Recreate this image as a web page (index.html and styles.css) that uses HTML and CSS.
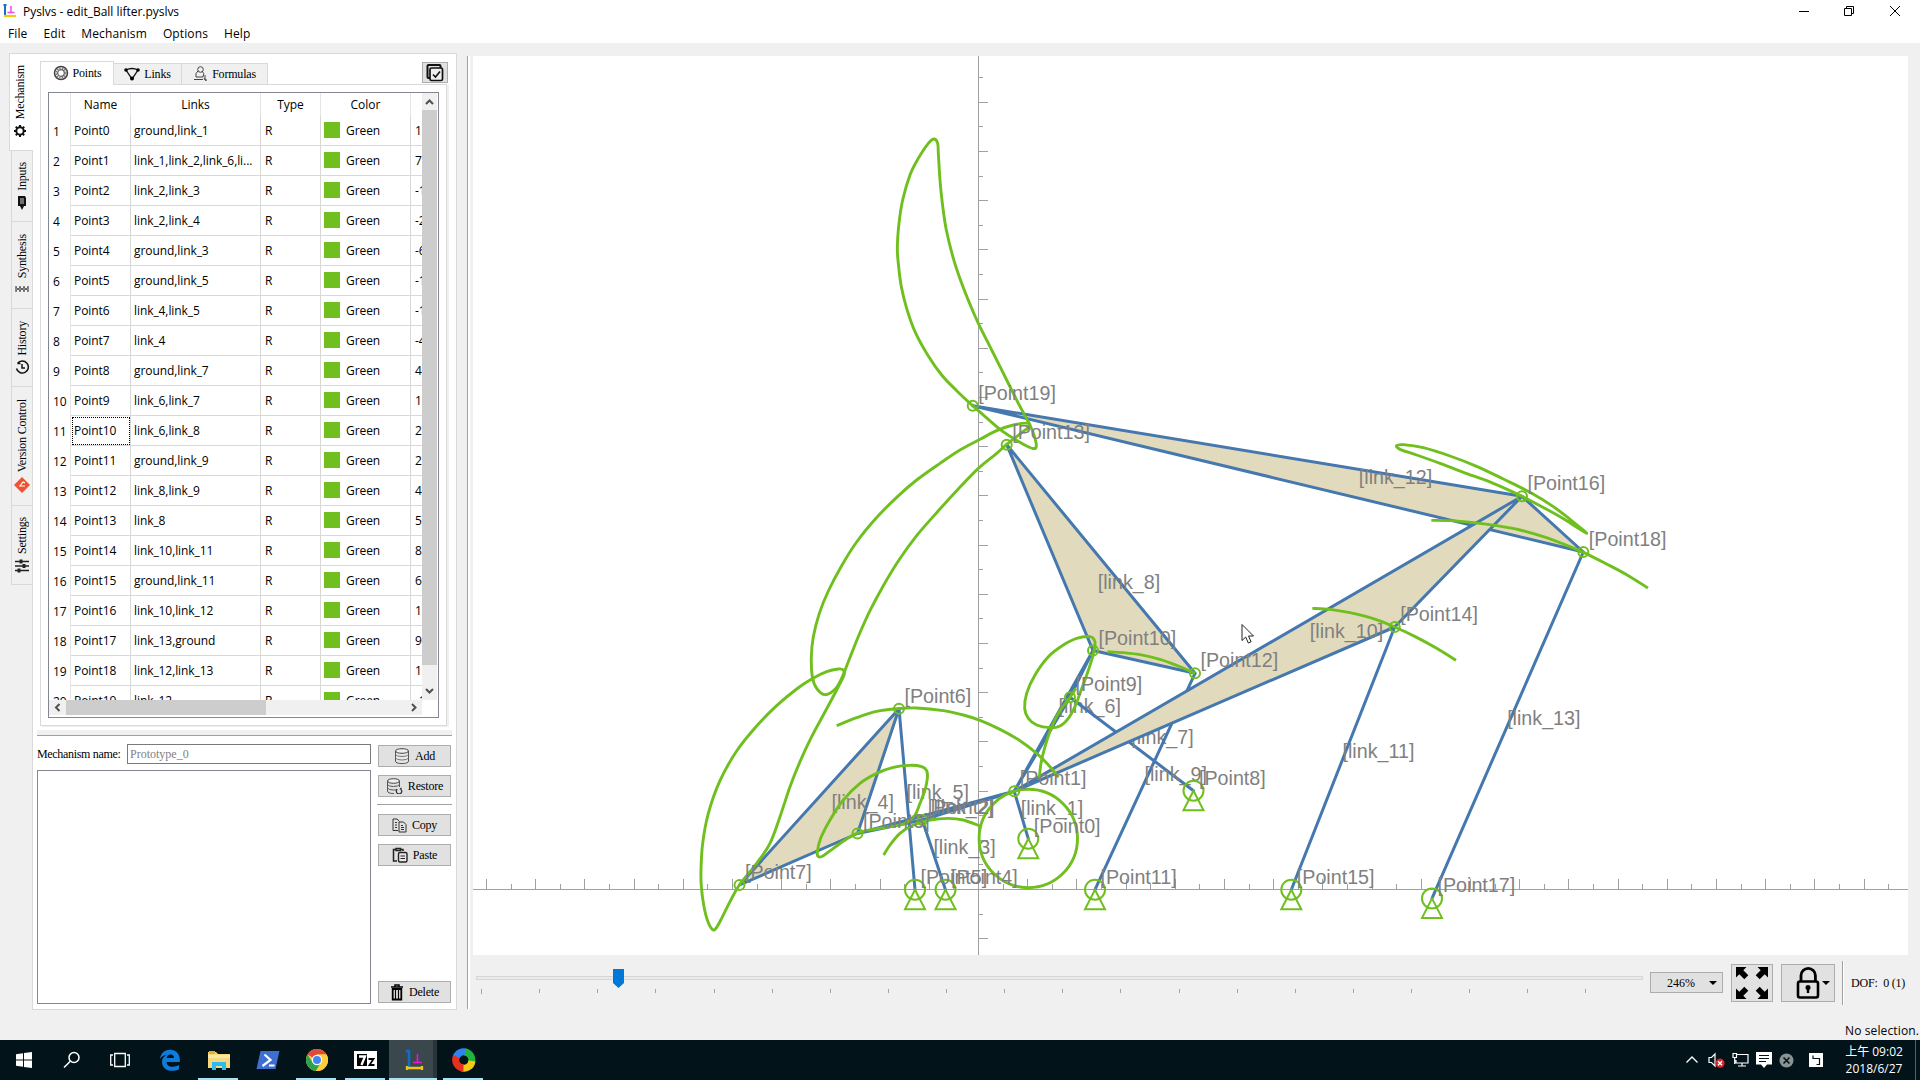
FILE: index.html
```html
<!DOCTYPE html>
<html lang="en">
<head>
<meta charset="utf-8">
<title>Pyslvs - edit_Ball lifter.pyslvs</title>
<link rel="stylesheet" href="styles.css">
</head>
<body>
<header class="titlebar">
  <svg class="app-icon" width="14" height="14" viewBox="0 0 14 14"><path d="M2 0v11M0.500 1h3" stroke="#1a6fc4" stroke-width="2" fill="none"/><path d="M1 12h12" stroke="#f5c815" stroke-width="2.200"/><path d="M8 2v6M4.500 8.500h7" stroke="#f04be0" stroke-width="1.500"/></svg>
  <span class="title">Pyslvs - edit_Ball lifter.pyslvs</span>
  <div class="window-buttons">
    <svg width="46" height="20" viewBox="0 0 46 20"><path d="M18 10.500h10" stroke="#000"/></svg>
    <svg width="46" height="20" viewBox="0 0 46 20"><path d="M17.500 7.500h7v7h-7zM19.500 7v-1.500h7v7h-2" stroke="#000" fill="none"/></svg>
    <svg width="46" height="20" viewBox="0 0 46 20"><path d="M17 5l10 10M27 5l-10 10" stroke="#000"/></svg>
  </div>
</header>
<nav class="menubar"><span>File</span><span>Edit</span><span>Mechanism</span><span>Options</span><span>Help</span></nav>

<main class="workspace">
  <div class="side-tabs">
    <div class="side-tab active" style="height:98px"><span>Mechanism</span>
      <svg width="12" height="12" viewBox="0 0 12 12"><circle cx="6" cy="6" r="3.700" fill="none" stroke="#111" stroke-width="2"/><path d="M6 0v2M6 10v2M0 6h2M10 6h2M1.800 1.800l1.400 1.400M8.800 8.800l1.400 1.400M10.200 1.800L8.800 3.200M3.200 8.800l-1.400 1.400" stroke="#111" stroke-width="2"/></svg></div>
    <div class="side-tab" style="height:71px"><span>Inputs</span>
      <svg width="12" height="15" viewBox="0 0 12 15"><path d="M2 1h7l1 2v8H2z" fill="#111"/><path d="M4 4h4M4 6h4M4 8h4" stroke="#fff" stroke-width=".8"/><path d="M4 11l2 4 2-4z" fill="#111"/></svg></div>
    <div class="side-tab synthesis" style="height:87px"><span>Synthesis</span>
      <svg width="14" height="8" viewBox="0 0 14 8"><path d="M1 1v6M13 1v6M5 1v6M9 1v6" stroke="#222" fill="none"/><path d="M1 2l4 4 4-4 4 4M1 6l4-4 4 4 4-4" stroke="#666" fill="none"/></svg></div>
    <div class="side-tab" style="height:78px"><span>History</span>
      <svg width="14" height="14" viewBox="0 0 14 14"><path d="M2.500 3.500a6 6 0 1 1-1 5M2.500 3.500h3M7 4v4h3" stroke="#111" stroke-width="1.500" fill="none"/></svg></div>
    <div class="side-tab" style="height:119px"><span>Version Control</span>
      <svg width="16" height="16" viewBox="0 0 16 16"><path d="M8 0l8 8-8 8-8-8z" fill="#f05133"/><path d="M5 9h6M6 9l3-4 2 1" stroke="#fff" stroke-width="1.200" fill="none"/></svg></div>
    <div class="side-tab" style="height:79px"><span>Settings</span>
      <svg width="14" height="14" viewBox="0 0 14 14"><path d="M0 2.500h14M0 7h14M0 11.500h14" stroke="#222" stroke-width="1.500"/><path d="M6 .5v4M9 5v4M4 9.500v4" stroke="#222" stroke-width="3"/></svg></div>
  </div>

  <section class="panel">
    <div class="tab-row">
      <div class="tab selected"><svg width="16" height="16" viewBox="0 0 16 16"><circle cx="8" cy="8" r="6.500" fill="none" stroke="#444" stroke-width="1.500"/><circle cx="8" cy="8" r="3.300" fill="none" stroke="#555" stroke-width="1.200"/><circle cx="8" cy="8" r="4.900" fill="none" stroke="#777" stroke-width="1.400" stroke-dasharray="1.600 1"/></svg>Points</div>
      <div class="tab"><svg width="16" height="14" viewBox="0 0 16 14"><path d="M2 3q6-3 12 0L8 12z" stroke="#111" fill="none" stroke-width="1.300"/><circle cx="2" cy="3" r="1.800"/><circle cx="14" cy="3" r="1.800"/><circle cx="8" cy="11.500" r="2"/></svg>Links</div>
      <div class="tab"><svg width="15" height="16" viewBox="0 0 15 16"><circle cx="7.500" cy="3.500" r="2.800" fill="none" stroke="#444"/><path d="M5 5Q2 7 3 11h7q2-4-1-6M1 13.500h9M12 9v5h2M11 12l2 3" stroke="#444" fill="none"/></svg>Formulas</div>
      <div class="check-button"><svg width="18" height="18" viewBox="0 0 18 18"><rect x="1.500" y="1" width="13" height="13" rx="1" fill="none" stroke="#111" stroke-width="2"/><rect x="4" y="4" width="12.500" height="12.500" rx="1.500" fill="#eee" stroke="#111" stroke-width="1.700"/><path d="M7 10.500l2.500 2.500 4.500-5.500" stroke="#111" stroke-width="1.600" fill="none"/></svg></div>
    </div>
    <div class="tab-page">
      <div class="table-frame">
        <div class="table-view">
          <table class="points">
            <colgroup><col style="width:22px"><col style="width:60px"><col style="width:130px"><col style="width:60px"><col style="width:90px"><col style="width:90px"></colgroup>
            <thead><tr><th></th><th>Name</th><th>Links</th><th>Type</th><th>Color</th><th></th></tr></thead>
            <tbody id="rows"></tbody>
          </table>
        </div>
        <div class="vscroll"><svg width="15" height="17" viewBox="0 0 15 17"><path d="M4 11l3.500-3.500L11 11" fill="none" stroke="#505050" stroke-width="2"/></svg><div class="vthumb"></div><svg class="bottom" width="15" height="17" viewBox="0 0 15 17"><path d="M4 6l3.500 3.500L11 6" fill="none" stroke="#505050" stroke-width="2"/></svg></div>
        <div class="hscroll"><svg width="17" height="15" viewBox="0 0 17 15"><path d="M10.500 4L7 7.500l3.500 3.500" fill="none" stroke="#505050" stroke-width="2"/></svg><div class="hthumb"></div><svg class="right" width="17" height="15" viewBox="0 0 17 15"><path d="M7 4l3.500 3.500L7 11" fill="none" stroke="#505050" stroke-width="2"/></svg></div>
      </div>
    </div>
    <div class="splitter-h"></div>
    <div class="storage">
      <div class="storage-left">
        <div class="name-row"><span>Mechanism name:</span><div class="name-input">Prototype_0</div></div>
        <div class="storage-list"></div>
      </div>
      <div class="storage-buttons">
        <div class="button"><svg width="16" height="16" viewBox="0 0 16 16"><path d="M1.500 3v10q0 2.500 6.500 2.500t6.500-2.500V3" fill="#e8e8e8" stroke="#555"/><ellipse cx="8" cy="3" rx="6.500" ry="2.300" fill="#eee" stroke="#444"/><path d="M1.500 6.500q1 2 6.500 2t6.500-2M1.500 10q1 2 6.500 2t6.500-2" fill="none" stroke="#777"/></svg>Add</div>
        <div class="button"><svg width="17" height="16" viewBox="0 0 17 16"><path d="M1.500 3v10q0 2.500 6.500 2.500M13.500 3v6" fill="none" stroke="#555"/><ellipse cx="7.500" cy="3" rx="6" ry="2.300" fill="#eee" stroke="#444"/><path d="M1.500 6.500q1 2 6 2t6-2M1.500 10q1 2 6 2t4-1" fill="none" stroke="#555"/><path d="M11 11.500a2.700 2.700 0 1 0 3.500-.5l1-1" fill="none" stroke="#333" stroke-width="1.300"/></svg>Restore</div>
        <div class="rule"></div>
        <div class="button"><svg width="15" height="15" viewBox="0 0 15 15"><path d="M6 12.500H1V1h4l2.500 2.500M7 4h4.500L14 6.500V14H7zM3 4.500h2M3 7h2M3 9.500h2M9 7.500h2M9 9.500h3M9 11.500h3" fill="none" stroke="#333"/></svg>Copy</div>
        <div class="button"><svg width="16" height="16" viewBox="0 0 16 16"><path d="M5 14H1.500V2.500H4M8.500 2.500H11V4M4 3.500V1.500h4.500v2z" fill="none" stroke="#222" stroke-width="1.500"/><rect x="6.500" y="5.500" width="8.500" height="9.500" rx="1.500" fill="#e8e8e8" stroke="#222" stroke-width="1.400"/><path d="M8.500 9h4.500M8.500 11.500h4.500" stroke="#222"/></svg>Paste</div>
        <div class="button last"><svg width="14" height="17" viewBox="0 0 14 17"><path d="M1 3h12M5 2.500V1h4v1.500" fill="none" stroke="#000" stroke-width="1.500"/><path d="M2.700 5v10.500h8.600V5z" fill="none" stroke="#000" stroke-width="1.800"/><path d="M5.500 5v10M8.500 5v10" stroke="#000" stroke-width="1.200"/></svg>Delete</div>
      </div>
    </div>
  </section>

  <div class="splitter-v"></div>

  <section class="view">
    <svg id="canvas" class="canvas" width="1435" height="899" viewBox="473 56 1435 899"></svg>
    <div class="controls">
      <svg id="slider" class="slider" width="1170" height="40" viewBox="475 960 1170 40"></svg>
      <div class="zoom-button"><span>246%</span><i class="caret"></i></div>
      <div class="fit-button"><svg width="34" height="34" viewBox="0 0 34 34"><path d="M1 1h10.500l-3.200 3.200 5 5-4 4-5-5L1 11.500zM33 1H22.500l3.200 3.200-5 5 4 4 5-5L33 11.500zM1 33h10.500l-3.200-3.200 5-5-4-4-5 5L1 22.500zM33 33H22.500l3.200-3.200-5-5 4-4 5 5L33 22.500z"/></svg></div>
      <div class="lock-button"><svg width="24" height="34" viewBox="0 0 24 34"><rect x="2" y="15.500" width="20" height="16" rx="2" fill="none" stroke="#000" stroke-width="2.600"/><path d="M5 15V9.500a7.200 7.200 0 0 1 14.400 0V15" fill="none" stroke="#000" stroke-width="2.800"/><circle cx="12" cy="21.500" r="2.500"/><path d="M12 22v5" stroke="#000" stroke-width="2.400"/></svg><i class="caret"></i></div>
      <div class="rule-v"></div>
      <span class="dof">DOF:&nbsp; 0 (1)</span>
    </div>
  </section>
</main>
<div class="statusbar">No selection.</div>

<footer class="taskbar">
  <div class="task"><svg width="16" height="16" viewBox="0 0 16 16"><path d="M0 2.200L7 1.200v6.300H0zM8 1l8-1v7.500H8zM0 8.500h7v6.300L0 13.800zM8 8.500h8V16l-8-1z" fill="#fff"/></svg></div>
  <div class="task"><svg width="18" height="18" viewBox="0 0 18 18"><circle cx="11" cy="6.500" r="5" fill="none" stroke="#fff" stroke-width="1.500"/><path d="M7.300 10.200L1 16.500" stroke="#fff" stroke-width="1.500"/></svg></div>
  <div class="task"><svg width="20" height="16" viewBox="0 0 20 16"><path d="M4.700 1.500h10.600v13H4.700zM3 3H.7v10H3M17 3h2.300v10H17" fill="none" stroke="#fff" stroke-width="1.300"/></svg></div>
  <div class="task"><svg width="22" height="22" viewBox="0 0 22 22"><path d="M1 9.800C1.800 4 6 .8 11.200.8c6 0 9.800 4.400 9.600 10v2.100H7.600c.2 3.300 2.900 4.800 6.200 4.800 2.300 0 4.300-.6 6.200-1.700v4.300c-2 1-4.300 1.500-7 1.500C7 21.800 3 18.200 3 13c0-3.300 2-6 5-7.200C5 6 2.500 7.600 1 9.800zm6.700-.7H15c0-2.200-1.200-3.500-3.400-3.500-2.100 0-3.500 1.300-3.900 3.500z" fill="#0f7cdb"/></svg></div>
  <div class="task open"><svg width="22" height="20" viewBox="0 0 22 20"><path d="M0 2h8l2 2h12v14H0z" fill="#f6d77b"/><path d="M1 1h6v3H1z" fill="#e2ae35"/><path d="M0 5h22v3H0z" fill="#fbe7a5"/><path d="M4 20v-8h14v8h-4v-4H8v4z" fill="#2bbcf0"/></svg></div>
  <div class="task"><svg width="24" height="20" viewBox="0 0 24 20"><path d="M4.500 1H23.500L19.500 19H.5z" fill="#3d6ed0"/><path d="M8.500 4.500l6 5.500-8 6M13 15.500h5.500" stroke="#fff" stroke-width="2.200" fill="none"/></svg></div>
  <div class="task open"><svg width="22" height="22" viewBox="0 0 22 22"><circle cx="11" cy="11" r="11" fill="#fc3"/><path d="M11 11L1.500 5.500A11 11 0 0 1 20.500 5.500H11z" fill="#df4a3c"/><path d="M1.500 5.500A11 11 0 0 0 10 22l5.500-9.500L11 11 6 12.500z" fill="#2da150"/><path d="M20.500 5.500H11v5l4.800 2L10 22A11 11 0 0 0 20.500 5.500z" fill="#fdcd3c"/><circle cx="11" cy="11" r="5.200" fill="#fff"/><circle cx="11" cy="11" r="4" fill="#4285f4"/></svg></div>
  <div class="task open"><svg width="23" height="18" viewBox="0 0 23 18"><path d="M.7.7h21.600v16.600H.7z" fill="#fff" stroke="#fff" stroke-width="1.400"/><path d="M3 3h10v12H3z" fill="#000"/><path d="M5 5.500h6L7.500 14" stroke="#fff" stroke-width="2.300" fill="none"/><path d="M14.500 8h5l-4 6h5" stroke="#000" stroke-width="1.800" fill="none"/></svg></div>
  <div class="task open current"><svg width="20" height="22" viewBox="0 0 20 22"><path d="M4 1v17M1 2h3" stroke="#0f6fc6" stroke-width="2.500" fill="none"/><path d="M2 19h16M2 17v4M17 17v4" stroke="#f0c419" stroke-width="2.300"/><path d="M12.500 5v8M8 13.500h9" stroke="#e815d8" stroke-width="1.600"/></svg></div>
  <div class="task open"><svg width="24" height="24" viewBox="0 0 24 24"><g fill="none" stroke-width="7"><path d="M4 9.500A8 8 0 0 1 15 4.500" stroke="#2f83f0"/><path d="M13 4A8 8 0 0 1 19 15.500" stroke="#22b33f"/><path d="M20 13A8 8 0 0 1 9 19.500" stroke="#f8c713"/><path d="M11.500 20A8 8 0 0 1 4.500 8.500" stroke="#e5301f"/></g></svg></div>
  <div class="tray">
    <svg width="14" height="16" viewBox="0 0 14 16"><path d="M1.500 10.500L7 5l5.500 5.500" fill="none" stroke="#fff" stroke-width="1.300"/></svg>
    <svg width="17" height="16" viewBox="0 0 17 16"><path d="M1 5.500h2.500L7 2v12l-3.500-3.500H1z" fill="none" stroke="#fff" stroke-width="1.200"/><circle cx="12" cy="11.200" r="4.600" fill="#d9252b"/><path d="M10 9.200l4 4M14 9.200l-4 4" stroke="#fff" stroke-width="1.400"/></svg>
    <svg width="17" height="16" viewBox="0 0 17 16"><path d="M5 2.500h11v8.500H4V8M10 11v3M6 14h8M1 1.500h3.500v4H1zM2.700 5.500V12" fill="none" stroke="#fff" stroke-width="1.200"/></svg>
    <svg width="16" height="16" viewBox="0 0 16 16"><path d="M0 0h16v12.500H11L8 16l-3-3.500H0z" fill="#fff"/><path d="M3 3.500h10M3 6.500h10M3 9.500h7" stroke="#02141a" stroke-width="1.100"/></svg>
    <svg width="15" height="15" viewBox="0 0 15 15"><circle cx="7.500" cy="7.500" r="7" fill="#8b9296"/><path d="M4.500 4.500l6 6M10.500 4.500l-6 6" stroke="#02141a" stroke-width="1.600"/></svg>
    <svg class="ime" width="14" height="14" viewBox="0 0 14 14"><path d="M0 0h14v14H0z" fill="#fff"/><path d="M4 2.500v3h6.500v6H7.500" stroke="#02141a" stroke-width="1.200" fill="none"/></svg>
    <div class="clock"><span>上午 09:02</span><span>2018/6/27</span></div>
    <div class="peek"></div>
  </div>
</footer>
<script src="script.js"></script>
</body>
</html>
```
FILE: styles.css
```css
* { box-sizing: border-box; }
body {
  margin: 0; width: 1920px; height: 1080px; overflow: hidden;
  display: flex; flex-direction: column;
  background: #f0f0f0; color: #000;
  font: 12px/16px "Liberation Serif", "Noto Sans CJK TC", serif;
  letter-spacing: -.2px;
}
svg { display: block; flex: none; }
.titlebar, .menubar, .statusbar, .points { font-family: "Open Sans", "Noto Sans", sans-serif; }

.titlebar { height: 22px; background: #fff; display: flex; align-items: center; padding-left: 3px; flex: none; }
.title { margin-left: 6px; letter-spacing: -.03px; padding-top: 2px; }
.window-buttons { margin-left: auto; display: flex; margin-right: 1px; margin-top: -1px; }
.menubar { height: 21px; background: #fff; display: flex; gap: 16px; padding: 4px 0 0 8px; flex: none; letter-spacing: .12px; }

.workspace { height: 976px; flex: none; display: flex; }
.side-tabs { width: 24px; margin: 10px 0 0 9px; flex: none; position: relative; z-index: 1; }
.side-tab {
  width: 21px; margin-left: 2px; border: 1px solid #d9d9d9; border-top: 0; border-right: 0;
  display: flex; flex-direction: column; align-items: center; justify-content: center; gap: 5px;
}
.side-tab.active { width: 24px; margin-left: 0; background: #fff; border-top: 1px solid #d9d9d9; gap: 5px; padding: 0 3px 2px 0; }
.side-tab.synthesis { padding-bottom: 3px; gap: 6px; }
.side-tab span { writing-mode: vertical-rl; transform: rotate(180deg); line-height: 14px; }

.panel { width: 425px; height: 957px; margin: 10px 0 0 -1px; border: 1px solid #d9d9d9; background: #fff; flex: none; padding: 7px 4px 4px; }
.tab-row { height: 23px; display: flex; align-items: flex-end; padding-left: 3px; }
.tab { height: 21px; border: 1px solid #d9d9d9; border-left: 0; border-bottom: 0; background: #f0f0f0; display: flex; align-items: center; justify-content: center; gap: 4px; width: 68px; }
.tab:nth-child(3) { width: 86px; }
.tab.selected { height: 24px; width: 74px; background: #fff; border-left: 1px solid #d9d9d9; margin-bottom: -1px; z-index: 1; padding-bottom: 2px; }
.check-button { margin-left: auto; margin-right: 4px; margin-bottom: 1px; width: 26px; height: 21px; border: 1px solid #adadad; background: #e1e1e1; display: flex; align-items: center; justify-content: center; }
.tab-page { height: 642px; width: 407px; margin-left: 3px; border: 1px solid #d9d9d9; box-shadow: 2px 1px 0 #f0f0f0; padding: 7px; }
.table-frame { width: 391px; height: 626px; border: 1px solid #828790; display: grid; grid-template: 607px 15px / 373px 15px; }
.table-view { overflow: hidden; }
.points { border-collapse: separate; border-spacing: 0; table-layout: fixed; width: 452px; letter-spacing: 0; }
.points th { height: 23px; padding: 1px 0 0; font-weight: 400; border-right: 1px solid #e5e5e5; line-height: 16px; }
.points td { height: 30px; padding: 0 0 0 3px; white-space: nowrap; border-right: 1px solid #d8d8d8; border-bottom: 1px solid #d8d8d8; overflow: hidden; letter-spacing: -.08px; }
.points td.index { border-bottom: 0; padding: 2px 0 0 4px; border-right-color: #e5e5e5; }
.points td:nth-child(n+4) { padding-left: 4px; }
.points td.color { padding-left: 3px; }
.points td.focused { outline: 1px dotted #000; outline-offset: -2px; }
.swatch { display: inline-block; width: 16px; height: 16px; background: #6fbf1e; vertical-align: middle; margin: -2px 6px 0 0; }
.vscroll { background: #f0f0f0; display: flex; flex-direction: column; }
.vthumb { height: 555px; background: #cdcdcd; }
.vscroll .bottom { margin-top: auto; }
.hscroll { background: #f0f0f0; display: flex; }
.hthumb { width: 200px; background: #cdcdcd; }
.hscroll .right { margin-left: auto; }

.splitter-h { height: 6px; margin-top: 4px; background: #f0f0f0; border-bottom: 1px solid #a0a0a0; }
.storage { display: flex; gap: 6px; margin-top: 8px; height: 261px; }
.storage-left { width: 334px; display: flex; flex-direction: column; }
.name-row { display: flex; justify-content: space-between; align-items: center; height: 20px; letter-spacing: -.32px; }
.name-input { width: 244px; height: 20px; border: 1px solid #7a7a7a; color: #7f7f7f; padding: 1px 2px; letter-spacing: 0; }
.storage-list { border: 1px solid #828790; height: 234px; margin-top: 6px; }
.storage-buttons { width: 75px; display: flex; flex-direction: column; padding: 1px 1px 2px; }
.button { height: 22px; border: 1px solid #adadad; background: #e1e1e1; display: flex; align-items: center; justify-content: center; gap: 5px; margin-bottom: 8px; }
.button.last { margin: auto 0 0; }
.rule { height: 1px; background: #a0a0a0; margin: -1px -1px 9px; }

.splitter-v { width: 3px; height: 953px; margin: 13px 3px 0 10px; background: #fff; border-left: 1px solid #a0a0a0; flex: none; }
.view { margin-top: 13px; width: 1447px; }
.canvas { background: #fff; }
.canvas text { font: 19.7px "Liberation Sans", Arial, sans-serif; fill: #808080; letter-spacing: 0; }
.controls { height: 60px; display: flex; align-items: center; padding: 0 0 5px 2px; }
.slider { align-self: flex-start; margin-top: 5px; }
.zoom-button { width: 73px; height: 21px; margin-left: 5px; border: 1px solid #adadad; background: #e1e1e1; display: flex; align-items: center; justify-content: space-between; padding: 0 5px 0 16px; letter-spacing: 0; }
.caret { border: 4px solid transparent; border-top-color: #000; border-bottom: 0; }
.fit-button { width: 42px; height: 38px; margin-left: 8px; border: 1px solid #adadad; background: #e1e1e1; display: flex; align-items: center; justify-content: center; }
.lock-button { width: 54px; height: 38px; margin-left: 8px; border: 1px solid #adadad; background: #e1e1e1; display: flex; align-items: center; padding-left: 14px; gap: 2px; }
.rule-v { width: 2px; height: 44px; margin-left: 7px; border-left: 1px solid #a0a0a0; background: #fff; }
.dof { margin-left: 7px; white-space: nowrap; }
.statusbar { height: 21px; text-align: right; padding: 4px 1px 0 0; letter-spacing: .12px; flex: none; }

.taskbar { height: 40px; background: #02131a; display: flex; flex: none; letter-spacing: 0; }
.task { width: 49px; height: 40px; display: flex; align-items: center; justify-content: center; }
.task:nth-child(-n+3) { width: 48px; }
.task:nth-child(n+4) { padding-left: 2px; }
.task.open { background: linear-gradient(#a5e4f5, #a5e4f5) center 38px / 40px 2px no-repeat; }
.task.current { background: linear-gradient(#a5e4f5, #a5e4f5) left 38px / 48px 2px no-repeat, linear-gradient(90deg, #3a484e 44px, #28353b 44px 48px, transparent 48px); }
.tray { margin-left: auto; display: flex; align-items: center; }
.tray svg { margin-right: 7px; }
.tray svg:first-child { margin-right: 9px; }
.tray .ime { margin: 0 0 0 8px; }
.clock { width: 64px; margin-left: 19px; color: #fff; font: 12px/17px "Open Sans", "Noto Sans CJK TC", sans-serif; display: flex; flex-direction: column; align-items: center; }
.peek { width: 5px; height: 40px; margin-left: 9px; border-left: 1px solid #56646a; }
```
FILE: script.js
```js
const rows = [
  ["ground,link_1", "1"], ["link_1,link_2,link_6,li...", "7"], ["link_2,link_3", "-1"], ["link_2,link_4", "-2"],
  ["ground,link_3", "-6"], ["ground,link_5", "-1"], ["link_4,link_5", "-1"], ["link_4", "-4"],
  ["ground,link_7", "4"], ["link_6,link_7", "1"], ["link_6,link_8", "2"], ["ground,link_9", "2"],
  ["link_8,link_9", "4"], ["link_8", "5"], ["link_10,link_11", "8"], ["ground,link_11", "6"],
  ["link_10,link_12", "1"], ["link_13,ground", "9"], ["link_12,link_13", "1"], ["link_12", "-1"]
];
document.getElementById("rows").innerHTML = rows.map(([links, x], i) =>
  `<tr><td class="index">${i + 1}</td><td${i === 10 ? ' class="focused"' : ""}>Point${i}</td><td>${links}</td><td>R</td>` +
  `<td class="color"><i class="swatch"></i>Green</td><td>${x}</td></tr>`).join("");

const GREEN = "#6fbf1e", BLUE = "#4478ae", GRAY = "#a0a0a4";
const points = [
  [1028.3, 838.7, 1], [1014.2, 791.3], [922.3, 820], [857.5, 833.5], [945.5, 889.7, 1], [915, 889.7, 1],
  [899, 708.7], [739.5, 885], [1193.5, 790.7, 1], [1070, 697.3], [1093, 650.5], [1095, 889.7, 1],
  [1195, 673.3], [1006.7, 444.7], [1394.7, 627], [1291.3, 889.7, 1], [1522, 496.3], [1432, 898.4, 1],
  [1583.3, 552], [972.7, 405.7]
];
const links = [
  ["link_1", 0, 1], ["link_2", 1, 2, 3], ["link_3", 2, 4], ["link_4", 3, 6, 7], ["link_5", 5, 6],
  ["link_6", 1, 9, 10], ["link_7", 8, 9], ["link_8", 10, 12, 13], ["link_9", 11, 12], ["link_12", 16, 18, 19],
  ["link_13", 17, 18], ["link_11", 14, 15], ["link_10", 1, 14, 16]
];
// Each track: origin x, origin y, closed flag, then samples in thirds of a pixel.
const tracks = [
  [860, 120, 1, [222,57,233,70,235,100,240,180,247,250,259,330,280,415,305,490,330,553,355,610,395,690,440,780,475,850,510,915,525,955,529,978,522,986,500,978,460,955,420,928,385,898,338,857,290,812,245,765,203,705,165,635,140,565,124,500,116,440,112,385,117,310,128,240,150,165,175,115,205,70]],
  [780, 400, 1, [745,70,700,75,650,92,600,118,540,150,480,190,410,240,350,292,288,355,230,426,185,497,145,573,118,640,100,710,94,770,97,830,110,865,135,884,165,868,185,835,207,780,237,705,270,632,310,557,357,480,410,407,470,338,530,272,595,205,650,160,680,133,725,98,745,82]],
  [660, 640, 1, [550,90,552,105,530,150,490,225,455,290,420,365,390,440,360,530,330,610,290,670,238,735,210,785,185,835,170,862,160,870,145,848,132,800,124,740,123,690,128,610,145,520,180,422,230,333,290,258,350,197,410,147,455,117,500,95,535,87]],
  [660, 640, 0, [530,257,590,233,650,214,715,206,770,204,850,212,910,225,960,241,1020,268,1080,302,1130,340,1170,380,1195,412]],
  [660, 640, 1, [475,650,472,635,482,595,510,540,550,480,600,430,650,400,700,382,750,376,785,380,800,392,802,415,795,450,780,490,765,525,735,550,690,560,640,568,595,578,560,597,520,625,490,647]],
  [660, 640, 0, [671,645,690,615,720,580,760,555,810,540,865,535,910,540,960,558]],
  [1000, 620, 1, [270,50,283,60,285,75,278,110,262,160,240,220,225,260,205,295,180,318,150,323,110,315,85,295,74,265,80,220,105,165,145,110,190,75,230,55]],
  [1000, 620, 0, [118,475,123,430,135,380,155,320,175,280,190,258,210,232,228,205]],
  [1000, 620, 0, [322,95,370,98,420,104,480,118,535,138,585,160]],
  [1290, 420, 0, [67,565,120,568,180,578,250,596,314,621,380,652,440,685,498,721]],
  [1290, 420, 0, [424,301,480,302,550,308,620,317,690,330,760,350,820,372,880,397,950,432,1010,464,1074,504]],
  [1290, 420, 1, [320,77,330,88,380,105,450,130,520,157,610,190,696,229,770,268,830,302,890,340,840,298,790,260,720,217,640,177,560,139,480,108,400,83,340,74]]
];

// Catmull-Rom spline through the samples, written as cubic segments.
function spline([ox, oy, closed, v]) {
  const p = [];
  for (let i = 0; i < v.length; i += 2) p.push([ox + v[i] / 3, oy + v[i + 1] / 3]);
  const n = p.length;
  const at = i => closed ? p[(i + n) % n] : p[Math.max(0, Math.min(n - 1, i))];
  let d = `M${p[0]}`;
  for (let i = 0; i < (closed ? n : n - 1); i++) {
    const [a, b, c, e] = [at(i - 1), at(i), at(i + 1), at(i + 2)];
    d += `C${b[0] + (c[0] - a[0]) / 6},${b[1] + (c[1] - a[1]) / 6} ${c[0] - (e[0] - b[0]) / 6},${c[1] - (e[1] - b[1]) / 6} ${c[0]},${c[1]}`;
  }
  return d + (closed ? "Z" : "");
}

let axes = "M473 889.5H1908M978.5 56V955";
for (let k = -20; k <= 37; k++) axes += `M${Math.round(978 + k * 24.6) + .5} 889v${k % 2 ? -5 : -10}`;
for (let k = -2; k <= 33; k++) axes += `M978 ${Math.round(889 - k * 24.6) + .5}h${k % 2 ? 5 : 10}`;
let out = `<path d="${axes}" stroke="${GRAY}" fill="none"/>`;

for (const [name, ...ids] of links) {
  const c = ids.map(i => points[i]);
  const cx = c.reduce((s, p) => s + p[0], 0) / c.length - .5;
  const cy = c.reduce((s, p) => s + p[1], 0) / c.length - .5;
  out += `<path d="M${c.map(p => p[0] + "," + p[1]).join("L")}Z" fill="#e2dabd" stroke="${BLUE}" stroke-width="3" stroke-linejoin="round"/>`;
  out += `<text x="${cx}" y="${cy}">[${name}]</text>`;
}
out += `<g fill="none" stroke="${GREEN}" stroke-width="2.900"><circle cx="1028.300" cy="838.500" r="49.200"/>`;
for (const t of tracks) out += `<path d="${spline(t)}"/>`;
out += `</g>`;
points.forEach(([x, y, ground], i) => {
  out += `<g fill="none" stroke="${GREEN}" stroke-width="2"><circle cx="${x}" cy="${y}" r="${ground ? 10 : 5}"/>`;
  if (ground) out += `<path d="M${x} ${y}l-10 19.500h20z"/>`;
  out += `</g><text x="${x + 5.500}" y="${y - 6}">[Point${i}]</text>`;
});
out += `<path d="M1242 624.500v16l3.700-3.500 2.600 6 2.800-1.200-2.600-5.800h5z" fill="#fff" stroke="#222"/>`;
document.getElementById("canvas").innerHTML = out;

let marks = "";
for (let k = 0; k < 20; k++) marks += `M${Math.round(481 + k * 58.130) + .5} 989v${k ? 4 : 5}`;
document.getElementById("slider").innerHTML =
  `<rect x="476.500" y="976.500" width="1166" height="3" fill="#e7eaea" stroke="#d6d6d6"/>` +
  `<path d="${marks}" stroke="#a8a898"/><path d="M613 969h11v14l-5.500 5-5.500-5z" fill="#0078d7"/>`;
```
